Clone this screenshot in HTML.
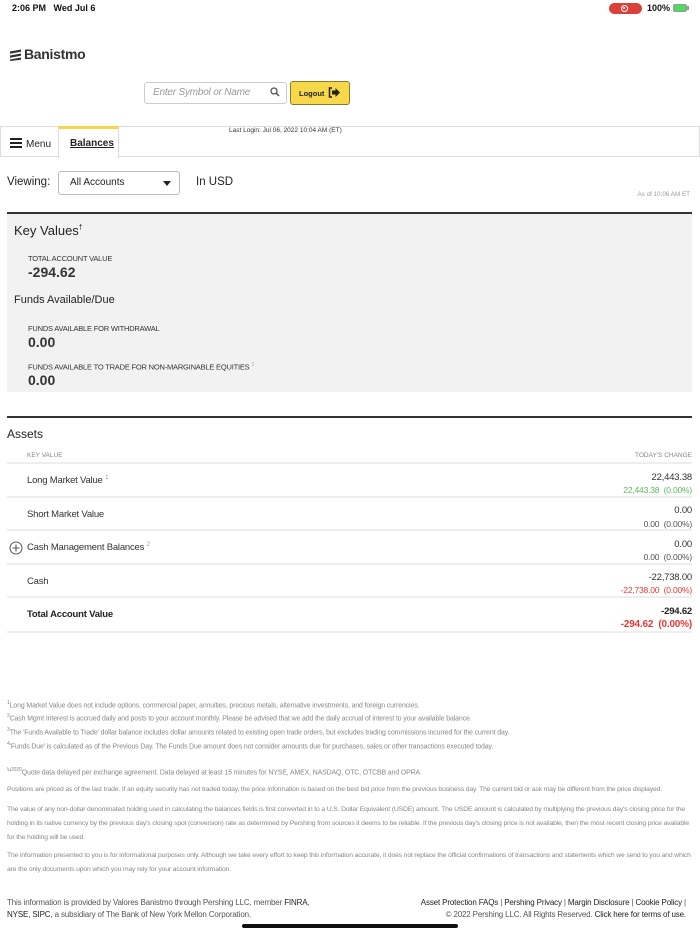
<!DOCTYPE html>
<html><head><meta charset="utf-8"><style>
*{margin:0;padding:0;box-sizing:border-box}
body{width:700px;height:934px;position:relative;background:#fff;font-family:"Liberation Sans",sans-serif;color:#222;overflow:hidden}
.a{position:absolute;white-space:nowrap}
.fn{font-size:6.9px;color:#888;letter-spacing:-0.1px}
.fn sup{font-size:5px}
.row{position:absolute;left:7px;width:685px;border-bottom:2px solid #eee}
.lbl{position:absolute;left:20px;font-size:9.5px;color:#333;letter-spacing:-0.2px}
.v1{position:absolute;right:0;font-size:9.5px;color:#333;letter-spacing:-0.2px}
.v2{position:absolute;right:0;font-size:8.5px;color:#555;letter-spacing:-0.2px}
.g{color:#5cb85c}.r{color:#e53935}
.cap{font-size:7.5px;color:#333;letter-spacing:-0.2px}
.big{font-size:14px;font-weight:bold;color:#333}
</style></head><body>
<div class="a" style="left:12px;top:3px;font-size:9px;font-weight:bold;color:#111">2:06 PM&nbsp;&nbsp; Wed Jul 6</div>
<div class="a" style="left:609px;top:3px;width:33px;height:11px;background:#d9413a;border-radius:6px"><div style="position:absolute;left:12px;top:2px;width:7px;height:7px;border:1.5px solid #fff;border-radius:50%"><div style="position:absolute;left:1px;top:1px;width:2px;height:2px;background:#fff;border-radius:50%"></div></div></div>
<div class="a" style="left:647px;top:3px;font-size:9px;font-weight:bold;color:#111">100%</div>
<div class="a" style="left:673px;top:4px;width:14px;height:8px;border:1px solid #999;border-radius:2px;background:#4cd964"></div>
<div class="a" style="left:687px;top:6px;width:2px;height:4px;background:#999"></div>

<svg class="a" style="left:9px;top:49px" width="14" height="12" viewBox="0 0 14 12"><path d="M1 2.5 L12 0.5 L12 2.8 L1 4.8Z M1 6.5 L12 4.5 L12 6.8 L1 8.8Z M1 10.5 L12 8.5 L12 10.8 L1 12Z" fill="#333"/></svg>
<div class="a" style="left:24px;top:46px;font-size:14px;font-weight:bold;color:#333;letter-spacing:-0.3px">Banistmo</div>

<div class="a" style="left:144px;top:82px;width:143px;height:22px;border:1px solid #ccc;border-radius:3px"></div>
<div class="a" style="left:153px;top:87px;font-size:10px;font-style:italic;color:#999;letter-spacing:-0.2px">Enter Symbol or Name</div>
<svg class="a" style="left:270px;top:87px" width="10" height="10" viewBox="0 0 10 10"><circle cx="4" cy="4" r="3" stroke="#555" stroke-width="1.3" fill="none"/><path d="M6.2 6.2 L9 9" stroke="#555" stroke-width="1.5"/></svg>
<div class="a" style="left:290px;top:81px;width:60px;height:24px;background:#f7d84a;border:1px solid #8a7a2a;border-radius:3px"></div>
<div class="a" style="left:299px;top:89px;font-size:7.5px;font-weight:bold;color:#222">Logout</div>
<svg class="a" style="left:328px;top:87px" width="13" height="11" viewBox="0 0 13 11"><path d="M4 1 H1.5 V10 H4" stroke="#222" stroke-width="1.5" fill="none"/><path d="M4 3.5 H7.5 V1 L12 5.5 L7.5 10 V7.5 H4Z" fill="#222"/></svg>

<div class="a" style="left:0;top:126px;width:700px;height:31px;border:1px solid #ddd;border-right:1px solid #ddd"></div>
<div class="a" style="left:58px;top:126px;width:61px;height:32px;background:#fff;border-left:1px solid #ddd;border-right:1px solid #ddd;border-top:3px solid #f4d64a"></div>
<div class="a" style="left:10px;top:138px;width:12px;height:2px;background:#222;box-shadow:0 4px 0 #222,0 8px 0 #222"></div>
<div class="a" style="left:26px;top:139px;font-size:10px;color:#222">Menu</div>
<div class="a" style="left:70px;top:138px;font-size:10px;font-weight:bold;color:#222;text-decoration:underline">Balances</div>
<div class="a" style="left:229px;top:127px;font-size:6.5px;color:#333">Last Login: Jul 06, 2022 10:04 AM (ET)</div>

<div class="a" style="left:7px;top:176px;font-size:11.5px;color:#222">Viewing:</div>
<div class="a" style="left:58px;top:171px;width:122px;height:24px;border:1px solid #bbb;border-radius:3px"></div>
<div class="a" style="left:70px;top:177px;font-size:10px;color:#222">All Accounts</div>
<div class="a" style="left:163px;top:181px;width:0;height:0;border-left:4px solid transparent;border-right:4px solid transparent;border-top:5px solid #222"></div>
<div class="a" style="left:196px;top:176px;font-size:11.5px;color:#222">In USD</div>
<div class="a" style="right:10px;top:191px;font-size:6.3px;color:#999">As of 10:06 AM ET</div>

<div class="a" style="left:7px;top:212px;width:685px;height:180px;background:#f2f2f2;border-top:2px solid #333"></div>
<div class="a" style="left:14px;top:223px;font-size:13px;color:#222">Key Values<sup style="font-size:7px">†</sup></div>
<div class="a cap" style="left:28px;top:254px">TOTAL ACCOUNT VALUE</div>
<div class="a big" style="left:28px;top:264px">-294.62</div>
<div class="a" style="left:14px;top:294px;font-size:11px;color:#222">Funds Available/Due</div>
<div class="a cap" style="left:28px;top:324px">FUNDS AVAILABLE FOR WITHDRAWAL</div>
<div class="a big" style="left:28px;top:334px">0.00</div>
<div class="a cap" style="left:28px;top:362px">FUNDS AVAILABLE TO TRADE FOR NON-MARGINABLE EQUITIES <sup style="font-size:5px;color:#aaa">3</sup></div>
<div class="a big" style="left:28px;top:372px">0.00</div>

<div class="a" style="left:7px;top:416px;width:685px;height:2px;background:#333"></div>
<div class="a" style="left:7px;top:427px;font-size:12px;color:#222">Assets</div>
<div class="row" style="top:450px;height:14px"><div class="a" style="left:20px;top:2px;font-size:6.5px;color:#888">KEY VALUE</div><div class="a" style="right:0;top:2px;font-size:6.5px;color:#888">TODAY'S CHANGE</div></div>
<div class="row" style="top:464px;height:34px"><div class="lbl" style="top:11px">Long Market Value <sup style="font-size:6px;color:#999">1</sup></div><div class="v1" style="top:8px">22,443.38</div><div class="v2 g" style="top:21px">22,443.38&nbsp; (0.00%)</div></div>
<div class="row" style="top:498px;height:33px"><div class="lbl" style="top:11px">Short Market Value</div><div class="v1" style="top:7px">0.00</div><div class="v2" style="top:21px">0.00&nbsp; (0.00%)</div></div>
<div class="row" style="top:531px;height:34px"><svg class="a" style="left:2px;top:10px" width="14" height="14" viewBox="0 0 14 14"><circle cx="7" cy="7" r="6" fill="none" stroke="#555" stroke-width="1"/><path d="M3.5 7H10.5M7 3.5V10.5" stroke="#555" stroke-width="1.1"/></svg><div class="lbl" style="top:11px">Cash Management Balances <sup style="font-size:6px;color:#999">2</sup></div><div class="v1" style="top:8px">0.00</div><div class="v2" style="top:21px">0.00&nbsp; (0.00%)</div></div>
<div class="row" style="top:565px;height:33px"><div class="lbl" style="top:11px">Cash</div><div class="v1" style="top:7px">-22,738.00</div><div class="v2 r" style="top:20px">-22,738.00&nbsp; <span style="color:#e53935">(0.00%)</span></div></div>
<div class="row" style="top:598px;height:35px"><div class="lbl" style="top:11px;font-weight:bold;color:#222">Total Account Value</div><div class="v1" style="top:8px;font-weight:bold;color:#222">-294.62</div><div class="v2 r" style="top:21px;font-size:10px;font-weight:bold">-294.62&nbsp; (0.00%)</div></div>

<div class="a fn" style="left:7px;top:700px"><sup>1</sup>Long Market Value does not include options, commercial paper, annuities, precious metals, alternative investments, and foreign currencies.</div>
<div class="a fn" style="left:7px;top:713px"><sup>2</sup>Cash Mgmt Interest is accrued daily and posts to your account monthly. Please be advised that we add the daily accrual of interest to your available balance.</div>
<div class="a fn" style="left:7px;top:727px"><sup>3</sup>The 'Funds Available to Trade' dollar balance includes dollar amounts related to existing open trade orders, but excludes trading commissions incurred for the current day.</div>
<div class="a fn" style="left:7px;top:741px"><sup>4</sup>'Funds Due' is calculated as of the Previous Day. The Funds Due amount does not consider amounts due for purchases, sales or other transactions executed today.</div>
<div class="a fn" style="left:7px;top:767px"><sup>\u2020</sup>Quote data delayed per exchange agreement. Data delayed at least 15 minutes for NYSE, AMEX, NASDAQ, OTC, OTCBB and OPRA.</div>
<div class="a fn" style="left:7px;top:786px;font-size:6.8px;letter-spacing:-0.15px">Positions are priced as of the last trade. If an equity security has not traded today, the price information is based on the best bid price from the previous business day. The current bid or ask may be different from the price displayed.</div>
<div class="a fn" style="left:7px;top:803px;font-size:6.8px;letter-spacing:-0.15px;white-space:normal;width:688px;line-height:14px">The value of any non-dollar denominated holding used in calculating the balances fields is first converted in to a U.S. Dollar Equivalent (USDE) amount. The USDE amount is calculated by multiplying the previous day's closing price for the holding in its native currency by the previous day's closing spot (conversion) rate as determined by Pershing from sources it deems to be reliable. If the previous day's closing price is not available, then the most recent closing price available for the holding will be used.</div>
<div class="a fn" style="left:7px;top:849px;font-size:6.8px;letter-spacing:-0.15px;white-space:normal;width:688px;line-height:14px">The information presented to you is for informational purposes only. Although we take every effort to keep this information accurate, it does not replace the official confirmations of transactions and statements which we send to you and which are the only documents upon which you may rely for your account information.</div>

<div class="a" style="left:7px;top:897px;font-size:8px;color:#555;line-height:12px;letter-spacing:-0.15px">This information is provided by Valores Banistmo through Pershing LLC, member <span style="color:#222">FINRA</span>,<br><span style="color:#222">NYSE</span>, <span style="color:#222">SIPC</span>, a subsidiary of The Bank of New York Mellon Corporation.</div>
<div class="a" style="right:14px;top:897px;font-size:8px;color:#555;line-height:12px;text-align:right;letter-spacing:-0.15px"><span style="color:#222">Asset Protection FAQs</span> | <span style="color:#222">Pershing Privacy</span> | <span style="color:#222">Margin Disclosure</span> | <span style="color:#222">Cookie Policy</span> |<br>© 2022 Pershing LLC. All Rights Reserved. <span style="color:#222">Click here for terms of use.</span></div>
<div class="a" style="left:242px;top:924px;width:216px;height:4px;background:#111;border-radius:2px"></div>
</body></html>
